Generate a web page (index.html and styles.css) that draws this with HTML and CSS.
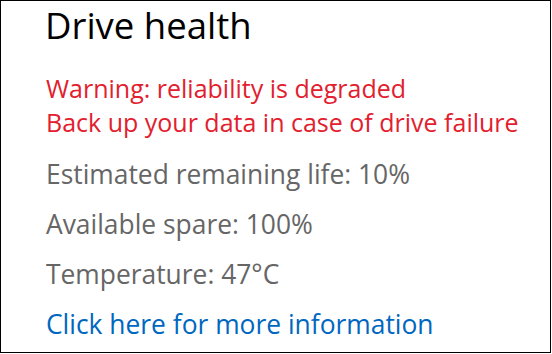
FILE: index.html
```html
<!DOCTYPE html>
<html lang="en">
<head>
<meta charset="utf-8">
<title>Drive health</title>
<link rel="stylesheet" href="styles.css">
</head>
<body>
<section class="panel">
  <h1 class="title">Drive health</h1>
  <div class="warning">
    <p class="line">Warning: reliability is degraded</p>
    <p class="line">Back up your data in case of drive failure</p>
  </div>
  <div class="stats">
    <p class="stat">Estimated remaining life: 10%</p>
    <p class="stat">Available spare: 100%</p>
    <p class="stat">Temperature: 47°C</p>
    <p class="stat"><a class="link" href="#">Click here for more information</a></p>
  </div>
</section>
</body>
</html>
```

FILE: styles.css
```css
html, body {
  margin: 0;
  padding: 0;
  background: #fff;
}

body {
  font-family: "Open Sans", "Noto Sans", sans-serif;
}

.panel {
  box-sizing: border-box;
  width: 551px;
  height: 353px;
  border: 1px solid #000;
  padding: 0 0 0 45px;
  display: flex;
  flex-direction: column;
}

.title {
  margin: 0 0 0 -1px;
  font-size: 36.5px;
  line-height: 48px;
  font-weight: 400;
  color: #000;
}

.warning {
  margin-top: 22px;
  color: #e2202e;
  font-size: 25px;
  line-height: 34px;
}

.line {
  margin: 0;
}

.stats {
  margin-top: 10px;
  color: #666;
  font-size: 26.4px;
  line-height: 50px;
}

.stat {
  margin: 0;
}

.link {
  color: #0067c0;
  text-decoration: none;
}
```
